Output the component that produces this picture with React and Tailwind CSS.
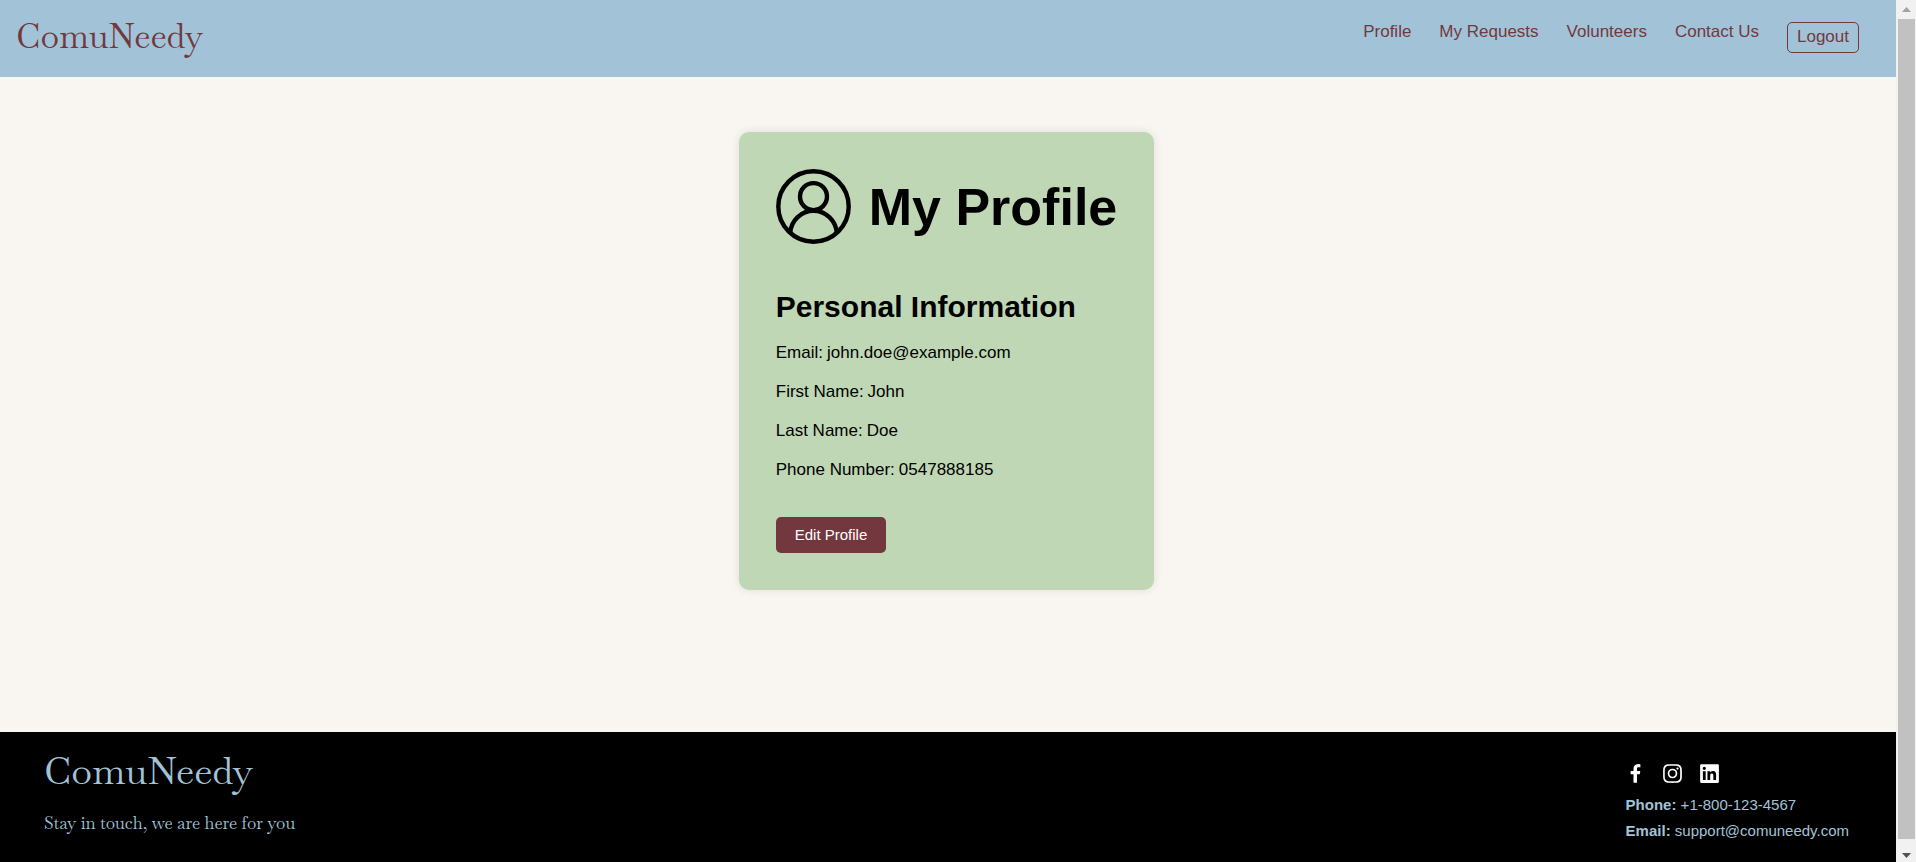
import React from "react";
import { BiLogoFacebook, BiLogoInstagram, BiLogoLinkedinSquare } from "react-icons/bi";

const links = ["Profile", "My Requests", "Volunteers", "Contact Us"];

const details = [
  ["Email", "john.doe@example.com"],
  ["First Name", "John"],
  ["Last Name", "Doe"],
  ["Phone Number", "0547888185"],
];

const socials = [
  ["Facebook", BiLogoFacebook],
  ["Instagram", BiLogoInstagram],
  ["LinkedIn", BiLogoLinkedinSquare],
];

function Header() {
  return (
    <header className="flex h-[77px] items-start justify-between bg-[#a2c3d7] pl-4 pr-[37px] text-[#73383d]">
      <a
        href="#home"
        className="pt-3 text-[34px] leading-12 font-['Baskervville','Libre_Baskerville','Liberation_Serif',serif]"
      >
        ComuNeedy
      </a>
      <nav className="flex items-start gap-7 pt-[22px] text-[17px] leading-5">
        {links.map((label) => (
          <a key={label} href="#nav">
            {label}
          </a>
        ))}
        <button type="button" className="rounded-[5px] border border-[#73383d] px-[9px] pt-1 pb-[5px] leading-5">
          Logout
        </button>
      </nav>
    </header>
  );
}

function AvatarIcon() {
  return (
    <svg viewBox="0 0 75 75" className="size-[75px] shrink-0" fill="none" stroke="#000" strokeWidth="4.4" aria-hidden="true">
      <circle cx="37.5" cy="37.5" r="35.2" />
      <circle cx="37.5" cy="27.6" r="13.5" />
      <path d="M14.2 63.5C15.3 51.5 25.2 41.7 37.5 41.7S59.7 51.5 60.8 63.5" />
    </svg>
  );
}

function ProfileCard() {
  return (
    <section className="rounded-[10px] bg-[#bfd7b5] p-[37px] text-black shadow-[0_0_10px_rgba(0,0,0,0.1)]">
      <div className="flex items-center gap-[18px]">
        <AvatarIcon />
        <h1 className="text-[52px] leading-[58px] font-bold">My Profile</h1>
      </div>
      <h2 className="mt-[45px] text-[30px] leading-9 font-bold">Personal Information</h2>
      <dl className="mt-[18px] flex flex-col gap-[19px] text-[17px] leading-5">
        {details.map(([label, value]) => (
          <div key={label} className="flex gap-1">
            <dt>{label}:</dt>
            <dd>{value}</dd>
          </div>
        ))}
      </dl>
      <button type="button" className="mt-[37px] block h-9 rounded-[5px] bg-[#73383d] px-[19px] text-[15px] text-white">
        Edit Profile
      </button>
    </section>
  );
}

function Footer() {
  return (
    <footer className="flex h-[130px] items-start justify-between bg-black pl-11 pr-[47px] text-[#a2c3d7]">
      <div className="pt-[15px] font-['Baskervville','Libre_Baskerville','Liberation_Serif',serif]">
        <p className="text-[38px] leading-12">ComuNeedy</p>
        <p className="mt-4 text-[17px] leading-6">Stay in touch, we are here for you</p>
      </div>
      <div className="pt-[29px] text-[15px] leading-[26px]">
        <div className="-ml-[3px] mb-1.5 flex gap-3 text-white">
          {socials.map(([name, Icon]) => (
            <a key={name} href="#social" aria-label={name}>
              <Icon size={25} />
            </a>
          ))}
        </div>
        <p>
          <strong>Phone:</strong> +1-800-123-4567
        </p>
        <p>
          <strong>Email:</strong> support@comuneedy.com
        </p>
      </div>
    </footer>
  );
}

function ScrollTrack() {
  return (
    <div className="flex w-5 shrink-0 flex-col items-center bg-[#f1f1f1]" aria-hidden="true">
      <svg viewBox="0 0 20 19" className="h-[19px] w-5 shrink-0">
        <path d="M6 12h9l-4.500-5z" fill="#a3a3a3" />
      </svg>
      <div className="w-[17px] flex-1 bg-[#c1c1c1]" />
      <svg viewBox="0 0 20 23" className="h-[23px] w-5 shrink-0">
        <path d="M6 14h9l-4.500 5z" fill="#505050" />
      </svg>
    </div>
  );
}

export default function App() {
  return (
    <div className="flex min-h-screen font-['Liberation_Sans',Arial,sans-serif]">
      <div className="flex min-w-0 flex-1 flex-col bg-[#f9f6f1]">
        <Header />
        <main className="flex flex-1 items-start justify-center pt-[55px] pr-[3px] pb-10">
          <ProfileCard />
        </main>
        <Footer />
      </div>
      <ScrollTrack />
    </div>
  );
}
